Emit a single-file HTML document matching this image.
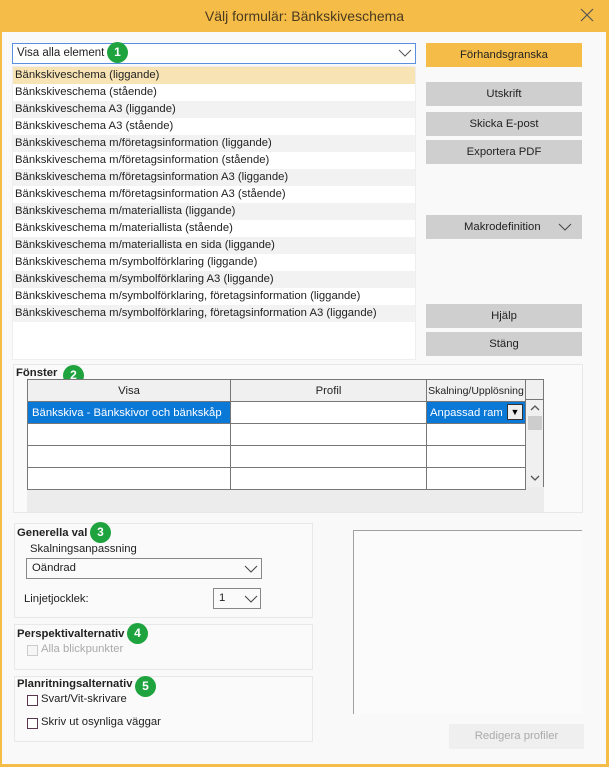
<!DOCTYPE html>
<html><head><meta charset="utf-8"><style>
*{box-sizing:border-box;margin:0;padding:0}
body{width:609px;height:767px;position:relative;overflow:hidden;background:#f5bd47;font-family:"Liberation Sans","DejaVu Sans",sans-serif;font-size:11.3px;color:#222}
.a{position:absolute}
#main{left:2px;top:32px;width:604px;height:732px;background:#f9f9f9}
.title{left:0;top:0;width:609px;height:32px;text-align:center;line-height:33px;font-size:14px;color:#4a3a20}
.btn{position:absolute;left:426px;width:156px;height:24px;background:#cfcfcf;text-align:center;line-height:24px;color:#222}
.row{position:absolute;left:13px;width:402px;height:17px;line-height:17px;padding-left:2px;white-space:nowrap}
.badge{position:absolute;width:21px;height:21px;border-radius:50%;background:#1ea33f;color:#fff;font-weight:bold;font-size:12px;text-align:center;line-height:21px}
.grp{position:absolute;background:#fafafa;border:1px solid #e8e8e8}
.bold{font-weight:bold}
.cb{position:absolute;width:11px;height:11px;border:1px solid #5a3550;background:#fff}
table{border-collapse:collapse}
td{border:1px solid #777;height:22px;padding:0}
</style></head><body>
<div class="a title">Välj formulär: Bänkskiveschema</div>
<svg class="a" style="left:580px;top:8px" width="14" height="14"><path d="M1 1 L13 13 M13 1 L1 13" stroke="#555" stroke-width="1.2"/></svg>
<div class="a" id="main"></div>

<div class="a" style="left:12px;top:43px;width:404px;height:21px;border:1px solid #5a8ee0;background:#fff;line-height:19px;padding-left:4px;font-size:11.5px">Visa alla element</div>
<svg class="a" style="left:398px;top:48px" width="14" height="10"><path d="M1 2 L7 8 L13 2" stroke="#555" fill="none"/></svg>
<div class="badge" style="left:107px;top:42px">1</div>

<div class="a" style="left:12px;top:66px;width:404px;height:294px;background:#fff;border:1px solid #eee"></div>
<div class="row" style="top:67px;background:#f8e3b5">Bänkskiveschema (liggande)</div>
<div class="row" style="top:84px">Bänkskiveschema (stående)</div>
<div class="row" style="top:101px;background:#f2f2f2">Bänkskiveschema A3 (liggande)</div>
<div class="row" style="top:118px">Bänkskiveschema A3 (stående)</div>
<div class="row" style="top:135px;background:#f2f2f2">Bänkskiveschema m/företagsinformation (liggande)</div>
<div class="row" style="top:152px">Bänkskiveschema m/företagsinformation (stående)</div>
<div class="row" style="top:169px;background:#f2f2f2">Bänkskiveschema m/företagsinformation A3 (liggande)</div>
<div class="row" style="top:186px">Bänkskiveschema m/företagsinformation A3 (stående)</div>
<div class="row" style="top:203px;background:#f2f2f2">Bänkskiveschema m/materiallista (liggande)</div>
<div class="row" style="top:220px">Bänkskiveschema m/materiallista (stående)</div>
<div class="row" style="top:237px;background:#f2f2f2">Bänkskiveschema m/materiallista en sida (liggande)</div>
<div class="row" style="top:254px">Bänkskiveschema m/symbolförklaring (liggande)</div>
<div class="row" style="top:271px;background:#f2f2f2">Bänkskiveschema m/symbolförklaring A3 (liggande)</div>
<div class="row" style="top:288px">Bänkskiveschema m/symbolförklaring, företagsinformation (liggande)</div>
<div class="row" style="top:305px;background:#f2f2f2">Bänkskiveschema m/symbolförklaring, företagsinformation A3 (liggande)</div>

<div class="btn" style="top:43px;background:#f5bd47">Förhandsgranska</div>
<div class="btn" style="top:82px">Utskrift</div>
<div class="btn" style="top:112px">Skicka E-post</div>
<div class="btn" style="top:140px">Exportera PDF</div>
<div class="btn" style="top:215px;text-align:left;padding-left:38px">Makrodefinition</div>
<svg class="a" style="left:558px;top:222px" width="14" height="10"><path d="M1 2 L7 8 L13 2" stroke="#444" fill="none"/></svg>
<div class="btn" style="top:304px">Hjälp</div>
<div class="btn" style="top:332px">Stäng</div>

<div class="grp" style="left:13px;top:364px;width:570px;height:149px"></div>
<div class="a bold" style="left:16px;top:367px">Fönster</div>
<div class="badge" style="left:63px;top:365px">2</div>
<div class="a" style="left:27px;top:379px;width:517px;height:133px;background:#ececec"></div>
<table class="a" style="left:27px;top:379px;width:499px;background:#fff">
<tr style="background:#f0f0f0"><td style="width:203px;height:21px;text-align:center">Visa</td><td style="width:196px;text-align:center">Profil</td><td style="text-align:center;font-size:10.5px;white-space:nowrap">Skalning/Upplösning</td></tr>
<tr><td style="background:#0a78d7;color:#fff;padding-left:4px;white-space:nowrap">Bänkskiva - Bänkskivor och bänkskåp</td><td></td><td style="background:#0a78d7;color:#fff;padding-left:3px;position:relative">Anpassad ram<span style="position:absolute;right:2px;top:2px;width:16px;height:16px;background:#eee;border:1px solid #333;color:#000;font-size:9px;text-align:center;line-height:15px">▼</span></td></tr>
<tr><td style="height:21px"></td><td></td><td></td></tr>
<tr><td style="height:21px"></td><td></td><td></td></tr>
<tr><td style="height:21px"></td><td></td><td></td></tr>
</table>
<div class="a" style="left:526px;top:379px;width:18px;height:21px;background:#f0f0f0;border:1px solid #777;border-left:none"></div>
<div class="a" style="left:526px;top:400px;width:18px;height:87px;background:#f0f0f0;border-right:1px solid #777"></div>
<svg class="a" style="left:530px;top:404px" width="10" height="8"><path d="M1 6 L5 2 L9 6" stroke="#555" fill="none" stroke-width="1.3"/></svg>
<div class="a" style="left:528px;top:416px;width:14px;height:14px;background:#cdcdcd"></div>
<svg class="a" style="left:530px;top:474px" width="10" height="8"><path d="M1 2 L5 6 L9 2" stroke="#555" fill="none" stroke-width="1.3"/></svg>

<div class="grp" style="left:14px;top:523px;width:299px;height:95px"></div>
<div class="a bold" style="left:17px;top:527px">Generella val</div>
<div class="badge" style="left:90px;top:522px">3</div>
<div class="a" style="left:30px;top:543px">Skalningsanpassning</div>
<div class="a" style="left:26px;top:558px;width:236px;height:21px;border:1px solid #888;background:#fafafa;padding:3px 0 0 5px">Oändrad</div>
<svg class="a" style="left:244px;top:564px" width="14" height="10"><path d="M1 2 L7 8 L13 2" stroke="#444" fill="none"/></svg>
<div class="a" style="left:24px;top:593px">Linjetjocklek:</div>
<div class="a" style="left:213px;top:588px;width:48px;height:21px;border:1px solid #888;background:#fafafa;padding:3px 0 0 5px">1</div>
<svg class="a" style="left:244px;top:594px" width="14" height="10"><path d="M1 2 L7 8 L13 2" stroke="#444" fill="none"/></svg>

<div class="grp" style="left:14px;top:624px;width:299px;height:46px"></div>
<div class="a bold" style="left:17px;top:628px">Perspektivalternativ</div>
<div class="badge" style="left:127px;top:623px">4</div>
<div class="cb" style="left:27px;top:645px;border-color:#ccc;background:#f6f6f6"></div>
<div class="a" style="left:41px;top:643px;color:#aaa">Alla blickpunkter</div>

<div class="grp" style="left:14px;top:676px;width:299px;height:66px"></div>
<div class="a bold" style="left:17px;top:678px">Planritningsalternativ</div>
<div class="badge" style="left:135px;top:676px">5</div>
<div class="cb" style="left:27px;top:695px"></div>
<div class="a" style="left:41px;top:693px">Svart/Vit-skrivare</div>
<div class="cb" style="left:27px;top:718px"></div>
<div class="a" style="left:41px;top:716px">Skriv ut osynliga väggar</div>

<div class="a" style="left:353px;top:530px;width:229px;height:184px;border-left:1px solid #a0a0a0;border-top:1px solid #a0a0a0;background:#fbfbfb"></div>
<div class="a" style="left:449px;top:724px;width:135px;height:25px;background:#efefef;color:#aaa;text-align:center;line-height:25px">Redigera profiler</div>
</body></html>
